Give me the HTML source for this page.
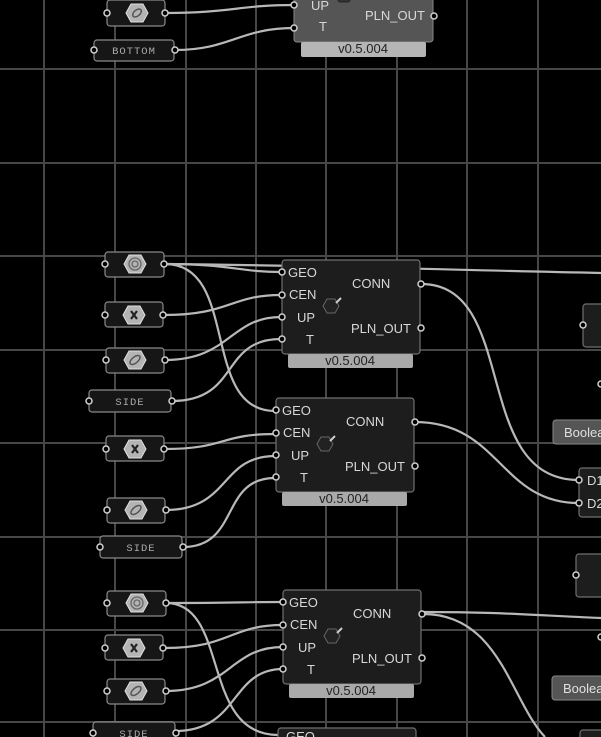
<!DOCTYPE html>
<html><head><meta charset="utf-8"><style>
html,body{margin:0;padding:0;background:#000;width:601px;height:737px;overflow:hidden}
svg{display:block}
text{font-family:"Liberation Sans",sans-serif}
.l{font-size:13px;fill:#d8d8d8}
.m{font-family:"Liberation Mono",monospace;font-size:10.5px;fill:#aaa;letter-spacing:1px}
.w{fill:none;stroke:#b8b8b8;stroke-width:2.2}
.g{stroke:#474747;stroke-width:2}
.b{fill:#1d1d1d;stroke:#707070;stroke-width:1.2}
.p{fill:#161616;stroke:#8a8a8a;stroke-width:1.2}
.t{fill:#a9a9a9}
.gr{fill:#000;stroke:#d0d0d0;stroke-width:1.5}
.hx{fill:#b4b4b4;stroke:#e0e0e0;stroke-width:1}
</style></head><body>
<svg width="601" height="737" viewBox="0 0 601 737">
<g class="g">
<line x1="44" y1="0" x2="44" y2="737"/><line x1="115" y1="0" x2="115" y2="737"/><line x1="186" y1="0" x2="186" y2="737"/><line x1="256" y1="0" x2="256" y2="737"/><line x1="326" y1="0" x2="326" y2="737"/><line x1="397" y1="0" x2="397" y2="737"/><line x1="467" y1="0" x2="467" y2="737"/><line x1="538" y1="0" x2="538" y2="737"/>
<line x1="0" y1="69" x2="601" y2="69"/><line x1="0" y1="163" x2="601" y2="163"/><line x1="0" y1="256" x2="601" y2="256"/><line x1="0" y1="350" x2="601" y2="350"/><line x1="0" y1="443" x2="601" y2="443"/><line x1="0" y1="537" x2="601" y2="537"/><line x1="0" y1="630" x2="601" y2="630"/><line x1="0" y1="722" x2="601" y2="722"/>
</g>
<g class="w">
<path d="M166,13 C230,13 240,5 294,5"/>
<path d="M175,50 C230,50 240,28 294,28"/>
<path d="M165,264 C230,264 240,272 281,272"/>
<path d="M165,264 C350,266 450,270 601,273"/>
<path d="M165,264 C240,264 200,411 275,411"/>
<path d="M164,315 C230,315 230,295 281,295"/>
<path d="M165,360 C230,360 230,317 281,317"/>
<path d="M172,401 C240,401 220,339 281,339"/>
<path d="M165,449 C225,449 220,434 275,434"/>
<path d="M166,510 C230,510 220,456 275,456"/>
<path d="M183,547 C240,547 220,478 275,478"/>
<path d="M421,284 C520,284 470,480 579,480"/>
<path d="M415,422 C500,422 500,503 579,503"/>
<path d="M166,603 C240,603 240,602 283,602"/>
<path d="M166,603 C230,603 200,735 278,735"/>
<path d="M165,648 C230,648 230,625 283,625"/>
<path d="M166,691 C230,691 230,647 283,647"/>
<path d="M175,731 C240,731 230,669 283,669"/>
<path d="M423,612 C500,612 530,615 601,618"/>
<path d="M423,614 C500,614 510,700 545,737"/>
</g>
<rect x="294" y="-10" width="139" height="52" rx="3" fill="#555" stroke="#888"/>
<rect x="301" y="42" width="125" height="15" rx="2" fill="#b5b5b5"/>
<text x="363" y="53" class="l" text-anchor="middle" style="fill:#222">v0.5.004</text>
<rect x="338" y="-6" width="12" height="8" rx="2" fill="#333" stroke="#222"/>
<text x="311" y="10" class="l">UP</text><text x="319" y="31" class="l">T</text>
<text x="365" y="20" class="l">PLN_OUT</text>
<circle cx="294" cy="5" r="3" class="gr"/><circle cx="294" cy="28" r="3" class="gr"/><circle cx="434" cy="16" r="3" class="gr"/>
<rect x="107" y="0" width="58" height="26" rx="3" class="p"/><polygon points="126,13 131,4 143,4 148,13 143,22 131,22" class="hx"/><ellipse cx="137" cy="13" rx="5" ry="3" fill="none" stroke="#555" stroke-width="1.5" transform="rotate(-40 137 13)"/>
<circle cx="107" cy="13" r="3" class="gr"/><circle cx="165" cy="13" r="3" class="gr"/>
<rect x="94" y="40" width="80" height="21" rx="3" class="p"/><text x="134" y="54" class="m" text-anchor="middle">BOTTOM</text>
<circle cx="94" cy="50" r="3" class="gr"/><circle cx="175" cy="50" r="3" class="gr"/>

<g id="c1">
<rect x="282" y="260" width="138" height="94" rx="3" class="b"/>
<rect x="288" y="354" width="125" height="14" rx="2" class="t"/>
<text x="350" y="365" class="l" text-anchor="middle" style="fill:#222">v0.5.004</text>
<text x="288" y="277" class="l">GEO</text><text x="289" y="299" class="l">CEN</text><text x="297" y="322" class="l">UP</text><text x="306" y="344" class="l">T</text>
<text x="352" y="288" class="l">CONN</text><text x="351" y="333" class="l">PLN_OUT</text>
<polygon points="323,306 327,299 335,299 339,306 335,313 327,313" fill="#222" stroke="#666"/><line x1="336" y1="303" x2="341" y2="298" stroke="#ccc" stroke-width="2"/>
<circle cx="282" cy="272" r="3" class="gr"/><circle cx="282" cy="295" r="3" class="gr"/><circle cx="282" cy="317" r="3" class="gr"/><circle cx="282" cy="339" r="3" class="gr"/>
<circle cx="421" cy="284" r="3" class="gr"/><circle cx="421" cy="328" r="3" class="gr"/>
</g>
<use href="#c1" transform="translate(-6,138)"/>
<use href="#c1" transform="translate(1,330)"/>
<rect x="278" y="728" width="138" height="20" rx="3" class="b"/>
<text x="286" y="741" class="l">GEO</text>

<g id="sp">
<rect x="105" y="252" width="59" height="25" rx="3" class="p"/>
<polygon points="124,264 129,255 141,255 146,264 141,273 129,273" class="hx"/>
<circle cx="135" cy="264" r="6" fill="none" stroke="#666" stroke-width="1.3"/><circle cx="135" cy="264" r="3" fill="none" stroke="#666" stroke-width="1.3"/>
<circle cx="105" cy="264" r="3" class="gr"/><circle cx="164" cy="264" r="3" class="gr"/>
</g>
<use href="#sp" transform="translate(2,339)"/>
<g id="xx">
<rect x="105" y="302" width="58" height="25" rx="3" class="p"/>
<polygon points="123,315 128,306 140,306 145,315 140,324 128,324" class="hx"/>
<path d="M131,311 L137,319 M137,311 L131,319" stroke="#222" stroke-width="2.2"/>
<circle cx="105" cy="315" r="3" class="gr"/><circle cx="163" cy="315" r="3" class="gr"/>
</g>
<use href="#xx" transform="translate(1,134)"/>
<use href="#xx" transform="translate(0,333)"/>
<g id="el">
<rect x="106" y="348" width="58" height="25" rx="3" class="p"/>
<polygon points="124,360 129,351 141,351 146,360 141,369 129,369" class="hx"/>
<ellipse cx="135" cy="360" rx="6" ry="3" fill="none" stroke="#555" stroke-width="1.5" transform="rotate(-40 135 360)"/>
<circle cx="106" cy="360" r="3" class="gr"/><circle cx="165" cy="360" r="3" class="gr"/>
</g>
<use href="#el" transform="translate(1,150)"/>
<use href="#el" transform="translate(1,331)"/>
<g id="sd">
<rect x="89" y="390" width="82" height="22" rx="3" class="p"/><text x="130" y="405" class="m" text-anchor="middle">SIDE</text>
<circle cx="89" cy="401" r="3" class="gr"/><circle cx="172" cy="401" r="3" class="gr"/>
</g>
<use href="#sd" transform="translate(11,146)"/>
<use href="#sd" transform="translate(4,332)"/>

<rect x="583" y="304" width="30" height="43" rx="3" class="b"/><circle cx="583" cy="325" r="3" class="gr"/>
<circle cx="601" cy="384" r="3" class="gr"/>
<rect x="553" y="420" width="60" height="24" rx="3" fill="#555" stroke="#888"/><text x="564" y="437" class="l" style="fill:#e0e0e0">Boolea</text>
<rect x="579" y="468" width="30" height="49" rx="3" class="b"/><circle cx="579" cy="480" r="3" class="gr"/><circle cx="579" cy="503" r="3" class="gr"/>
<text x="587" y="485" class="l">D1</text><text x="587" y="508" class="l">D2</text>
<rect x="576" y="554" width="30" height="43" rx="3" class="b"/><circle cx="576" cy="575" r="3" class="gr"/>
<circle cx="601" cy="637" r="3" class="gr"/>
<rect x="552" y="676" width="60" height="24" rx="3" fill="#555" stroke="#888"/><text x="563" y="693" class="l" style="fill:#e0e0e0">Boolea</text>
<rect x="580" y="730" width="30" height="20" rx="3" class="b"/>
</svg>
</body></html>
